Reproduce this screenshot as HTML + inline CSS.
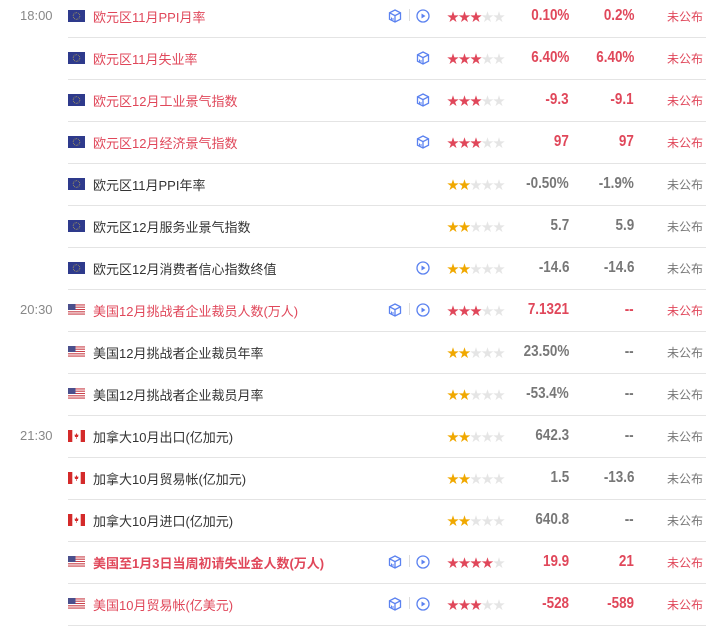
<!DOCTYPE html><html><head><meta charset="utf-8"><style>
body{margin:0;width:706px;height:630px;background:#fff;position:relative;overflow:hidden;font-family:"Liberation Sans","Noto Sans CJK SC",sans-serif}
.r{position:absolute;left:0;width:706px;height:42px}
.sep{position:absolute;left:68px;right:0;top:37px;height:1px;background:#e4e4e4}
.t{position:absolute;left:20px;top:8px;font-size:13px;color:#888}
.f{position:absolute;left:68px;top:10px;width:17px;height:12px}
.n{position:absolute;left:93px;top:7px;font-size:13px;color:#333;white-space:nowrap}
.red .n{color:#e0475a}
.b .n{font-weight:bold}
.ic{position:absolute;top:9px}
.st{position:absolute;left:447px;top:8px;font-size:12px;letter-spacing:-0.5px;color:#e5e5e5}
.st i{font-style:normal}
.red .st i{color:#e0475a}.gr .st i{color:#f0a800}
.v{position:absolute;top:7px;font-size:16px;font-weight:bold;color:#777;transform:scaleX(.84);transform-origin:right;text-align:right;white-space:nowrap}
.red .v{color:#e0475a}
.v1{right:137px}.v2{right:72px}
.s{position:absolute;left:667px;top:8px;font-size:12px;color:#777}
.red .s{color:#e0475a}
.dv{position:absolute;left:409px;top:9px;width:1px;height:12px;background:#ddd}
</style></head><body>
<svg width="0" height="0" style="position:absolute"><defs>
<symbol id="cube" viewBox="0 0 14 14"><path d="M7 1L12.5 3.8V10.2L7 13L1.5 10.2V3.8Z M1.5 3.8L7 6.6L12.5 3.8 M7 6.6V13" fill="none" stroke="#5b82f0" stroke-width="1.3"/><path d="M3.5 8.5v2M5 9v2" stroke="#5b82f0" stroke-width="1"/></symbol>
<symbol id="play" viewBox="0 0 14 14"><circle cx="7" cy="7" r="6" fill="none" stroke="#5b82f0" stroke-width="1.3"/><path d="M5.5 4.5L9.5 7L5.5 9.5Z" fill="#5b82f0"/></symbol>
<symbol id="eu" viewBox="0 0 17 12"><rect width="17" height="12" fill="#2e3a8c"/><circle cx="8.5" cy="6" r="3.3" fill="none" stroke="#c9b54a" stroke-width=".8" stroke-dasharray=".8 .9"/></symbol>
<symbol id="us" viewBox="0 0 17 12"><rect width="17" height="12" fill="#fff"/><path d="M0 .9h17M0 3.2h17M0 5.5h17M0 7.8h17M0 10.1h17" stroke="#c9404a" stroke-width="1.1"/><rect width="7.5" height="6" fill="#4a4f8c"/></symbol>
<symbol id="ca" viewBox="0 0 17 12"><rect width="17" height="12" fill="#fff"/><rect width="4.3" height="12" fill="#d42a2a"/><rect x="12.7" width="4.3" height="12" fill="#d42a2a"/><path d="M8.5 3l1 2 1-.5-.5 2.5H7l-.5-2.5 1 .5z M8.2 7h.6v2h-.6z" fill="#d42a2a"/></symbol>
</defs></svg>

<div class="r red" style="top:0"><span class="t">18:00</span><svg class="f"><use href="#eu"/></svg><span class="n">欧元区11月PPI月率</span><svg class="ic" style="left:388px" width="14" height="14"><use href="#cube"/></svg><span class="dv"></span><svg class="ic" style="left:416px" width="14" height="14"><use href="#play"/></svg><span class="st"><i>★★★</i>★★</span><span class="v v1">0.10%</span><span class="v v2">0.2%</span><span class="s">未公布</span><div class="sep"></div></div>

<div class="r red" style="top:42px"><svg class="f"><use href="#eu"/></svg><span class="n">欧元区11月失业率</span><svg class="ic" style="left:416px" width="14" height="14"><use href="#cube"/></svg><span class="st"><i>★★★</i>★★</span><span class="v v1">6.40%</span><span class="v v2">6.40%</span><span class="s">未公布</span><div class="sep"></div></div>

<div class="r red" style="top:84px"><svg class="f"><use href="#eu"/></svg><span class="n">欧元区12月工业景气指数</span><svg class="ic" style="left:416px" width="14" height="14"><use href="#cube"/></svg><span class="st"><i>★★★</i>★★</span><span class="v v1">-9.3</span><span class="v v2">-9.1</span><span class="s">未公布</span><div class="sep"></div></div>

<div class="r red" style="top:126px"><svg class="f"><use href="#eu"/></svg><span class="n">欧元区12月经济景气指数</span><svg class="ic" style="left:416px" width="14" height="14"><use href="#cube"/></svg><span class="st"><i>★★★</i>★★</span><span class="v v1">97</span><span class="v v2">97</span><span class="s">未公布</span><div class="sep"></div></div>

<div class="r gr" style="top:168px"><svg class="f"><use href="#eu"/></svg><span class="n">欧元区11月PPI年率</span><span class="st"><i>★★</i>★★★</span><span class="v v1">-0.50%</span><span class="v v2">-1.9%</span><span class="s">未公布</span><div class="sep"></div></div>

<div class="r gr" style="top:210px"><svg class="f"><use href="#eu"/></svg><span class="n">欧元区12月服务业景气指数</span><span class="st"><i>★★</i>★★★</span><span class="v v1">5.7</span><span class="v v2">5.9</span><span class="s">未公布</span><div class="sep"></div></div>

<div class="r gr" style="top:252px"><svg class="f"><use href="#eu"/></svg><span class="n">欧元区12月消费者信心指数终值</span><svg class="ic" style="left:416px" width="14" height="14"><use href="#play"/></svg><span class="st"><i>★★</i>★★★</span><span class="v v1">-14.6</span><span class="v v2">-14.6</span><span class="s">未公布</span><div class="sep"></div></div>

<div class="r red" style="top:294px"><span class="t">20:30</span><svg class="f"><use href="#us"/></svg><span class="n">美国12月挑战者企业裁员人数(万人)</span><svg class="ic" style="left:388px" width="14" height="14"><use href="#cube"/></svg><span class="dv"></span><svg class="ic" style="left:416px" width="14" height="14"><use href="#play"/></svg><span class="st"><i>★★★</i>★★</span><span class="v v1">7.1321</span><span class="v v2">--</span><span class="s">未公布</span><div class="sep"></div></div>

<div class="r gr" style="top:336px"><svg class="f"><use href="#us"/></svg><span class="n">美国12月挑战者企业裁员年率</span><span class="st"><i>★★</i>★★★</span><span class="v v1">23.50%</span><span class="v v2">--</span><span class="s">未公布</span><div class="sep"></div></div>

<div class="r gr" style="top:378px"><svg class="f"><use href="#us"/></svg><span class="n">美国12月挑战者企业裁员月率</span><span class="st"><i>★★</i>★★★</span><span class="v v1">-53.4%</span><span class="v v2">--</span><span class="s">未公布</span><div class="sep"></div></div>

<div class="r gr" style="top:420px"><span class="t">21:30</span><svg class="f"><use href="#ca"/></svg><span class="n">加拿大10月出口(亿加元)</span><span class="st"><i>★★</i>★★★</span><span class="v v1">642.3</span><span class="v v2">--</span><span class="s">未公布</span><div class="sep"></div></div>

<div class="r gr" style="top:462px"><svg class="f"><use href="#ca"/></svg><span class="n">加拿大10月贸易帐(亿加元)</span><span class="st"><i>★★</i>★★★</span><span class="v v1">1.5</span><span class="v v2">-13.6</span><span class="s">未公布</span><div class="sep"></div></div>

<div class="r gr" style="top:504px"><svg class="f"><use href="#ca"/></svg><span class="n">加拿大10月进口(亿加元)</span><span class="st"><i>★★</i>★★★</span><span class="v v1">640.8</span><span class="v v2">--</span><span class="s">未公布</span><div class="sep"></div></div>

<div class="r red b" style="top:546px"><svg class="f"><use href="#us"/></svg><span class="n">美国至1月3日当周初请失业金人数(万人)</span><svg class="ic" style="left:388px" width="14" height="14"><use href="#cube"/></svg><span class="dv"></span><svg class="ic" style="left:416px" width="14" height="14"><use href="#play"/></svg><span class="st"><i>★★★★</i>★</span><span class="v v1">19.9</span><span class="v v2">21</span><span class="s">未公布</span><div class="sep"></div></div>

<div class="r red" style="top:588px"><svg class="f"><use href="#us"/></svg><span class="n">美国10月贸易帐(亿美元)</span><svg class="ic" style="left:388px" width="14" height="14"><use href="#cube"/></svg><span class="dv"></span><svg class="ic" style="left:416px" width="14" height="14"><use href="#play"/></svg><span class="st"><i>★★★</i>★★</span><span class="v v1">-528</span><span class="v v2">-589</span><span class="s">未公布</span><div class="sep"></div></div>
</body></html>
